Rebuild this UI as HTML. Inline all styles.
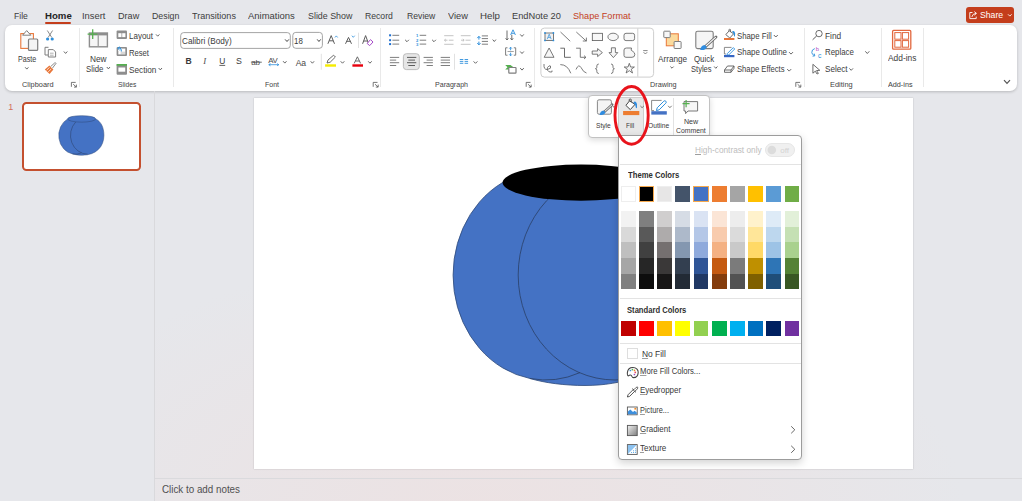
<!DOCTYPE html>
<html><head><meta charset="utf-8"><style>
*{margin:0;padding:0;box-sizing:border-box}
html,body{width:1022px;height:501px;overflow:hidden}
body{position:relative;font-family:"Liberation Sans", sans-serif;background:#E6E7EB}
.t{position:absolute;white-space:nowrap;line-height:1}
.a{position:absolute}
svg{position:absolute;overflow:visible}
.u{text-decoration:underline;text-underline-offset:0.5px;text-decoration-thickness:0.5px;text-decoration-color:rgba(60,60,60,0.5)}
</style></head>
<body>
<div class="a" style="left:0px;top:0px;width:1022px;height:501px;background:#E6E7EB"></div>
<div class="a" style="left:155px;top:91px;width:867px;height:410px;background:radial-gradient(ellipse 480px 260px at 330px 420px, rgba(236,226,227,1) 0%, rgba(236,226,227,0.6) 45%, rgba(230,231,235,0) 100%)"></div>
<div class="t" style="left:13.57px;top:11.39px;font-size:9.5px;color:#3D3D3D;font-weight:normal;transform:scaleX(0.9051);transform-origin:0 0;">File</div>
<div class="t" style="left:44.52px;top:11.39px;font-size:9.5px;color:#242424;font-weight:bold;transform:scaleX(1.0135);transform-origin:0 0;">Home</div>
<div class="a" style="left:45px;top:22px;width:26px;height:2px;background:#C43E1C;border-radius:1px"></div>
<div class="t" style="left:82.03px;top:11.39px;font-size:9.5px;color:#3D3D3D;font-weight:normal;transform:scaleX(0.9862);transform-origin:0 0;">Insert</div>
<div class="t" style="left:118.25px;top:11.39px;font-size:9.5px;color:#3D3D3D;font-weight:normal;transform:scaleX(0.9566);transform-origin:0 0;">Draw</div>
<div class="t" style="left:152.06px;top:11.39px;font-size:9.5px;color:#3D3D3D;font-weight:normal;transform:scaleX(0.9257);transform-origin:0 0;">Design</div>
<div class="t" style="left:192.25px;top:11.39px;font-size:9.5px;color:#3D3D3D;font-weight:normal;transform:scaleX(0.9522);transform-origin:0 0;">Transitions</div>
<div class="t" style="left:248.23px;top:11.39px;font-size:9.5px;color:#3D3D3D;font-weight:normal;transform:scaleX(0.9946);transform-origin:0 0;">Animations</div>
<div class="t" style="left:307.56px;top:11.39px;font-size:9.5px;color:#3D3D3D;font-weight:normal;transform:scaleX(0.9339);transform-origin:0 0;">Slide Show</div>
<div class="t" style="left:364.57px;top:11.39px;font-size:9.5px;color:#3D3D3D;font-weight:normal;transform:scaleX(0.9099);transform-origin:0 0;">Record</div>
<div class="t" style="left:406.57px;top:11.39px;font-size:9.5px;color:#3D3D3D;font-weight:normal;transform:scaleX(0.9104);transform-origin:0 0;">Review</div>
<div class="t" style="left:447.54px;top:11.39px;font-size:9.5px;color:#3D3D3D;font-weight:normal;transform:scaleX(0.9758);transform-origin:0 0;">View</div>
<div class="t" style="left:479.51px;top:11.39px;font-size:9.5px;color:#3D3D3D;font-weight:normal;transform:scaleX(1.0217);transform-origin:0 0;">Help</div>
<div class="t" style="left:511.54px;top:11.39px;font-size:9.5px;color:#3D3D3D;font-weight:normal;transform:scaleX(0.9749);transform-origin:0 0;">EndNote 20</div>
<div class="t" style="left:572.55px;top:11.39px;font-size:9.5px;color:#C43E1C;font-weight:normal;transform:scaleX(0.9569);transform-origin:0 0;">Shape Format</div>
<div class="a" style="left:966px;top:7px;width:48px;height:16px;background:#C43E1C;border-radius:3px"></div>
<div class="t" style="left:979.57px;top:10.19px;font-size:9.5px;color:#FFFFFF;font-weight:normal;transform:scaleX(0.9136);transform-origin:0 0;">Share</div>
<div class="a" style="left:5px;top:25px;width:1012px;height:66px;background:#FFFFFF;border-radius:7px;box-shadow:0 1px 3px rgba(0,0,0,0.20)"></div>
<svg width="1022" height="501" style="left:0px;top:0px" viewBox="0 0 1022 501"><rect x="180.7" y="32.6" width="109.6" height="15.8" rx="3" fill="#fff" stroke="#9A9A9A" stroke-width="0.9"/><rect x="292.8" y="32.4" width="29.6" height="15.9" rx="3" fill="#fff" stroke="#9A9A9A" stroke-width="0.9"/></svg>
<div class="a" style="left:79px;top:28px;width:1px;height:59px;background:#E9E9E9"></div>
<div class="a" style="left:172.7px;top:28px;width:1px;height:59px;background:#E9E9E9"></div>
<div class="a" style="left:380.4px;top:28px;width:1px;height:59px;background:#E9E9E9"></div>
<div class="a" style="left:534.2px;top:28px;width:1px;height:59px;background:#E9E9E9"></div>
<div class="a" style="left:803.7px;top:28px;width:1px;height:59px;background:#E9E9E9"></div>
<div class="a" style="left:880.5px;top:28px;width:1px;height:59px;background:#E9E9E9"></div>
<div class="a" style="left:922.6px;top:28px;width:1px;height:59px;background:#E9E9E9"></div>
<div class="t" style="left:22.13px;top:80.96px;font-size:7.2px;color:#424242;font-weight:normal;transform:scaleX(1.0251);transform-origin:0 0;">Clipboard</div>
<div class="t" style="left:117.66px;top:80.96px;font-size:7.2px;color:#424242;font-weight:normal;transform:scaleX(0.9333);transform-origin:0 0;">Slides</div>
<div class="t" style="left:265.35px;top:80.96px;font-size:7.2px;color:#424242;font-weight:normal;transform:scaleX(0.9729);transform-origin:0 0;">Font</div>
<div class="t" style="left:435.35px;top:80.96px;font-size:7.2px;color:#424242;font-weight:normal;transform:scaleX(0.9830);transform-origin:0 0;">Paragraph</div>
<div class="t" style="left:650.04px;top:80.96px;font-size:7.2px;color:#424242;font-weight:normal;transform:scaleX(1.0095);transform-origin:0 0;">Drawing</div>
<div class="t" style="left:830.23px;top:80.96px;font-size:7.2px;color:#424242;font-weight:normal;transform:scaleX(1.0299);transform-origin:0 0;">Editing</div>
<div class="t" style="left:888.44px;top:80.96px;font-size:7.2px;color:#424242;font-weight:normal;transform:scaleX(1.0061);transform-origin:0 0;">Add-ins</div>
<div class="t" style="left:17.94px;top:55.42px;font-size:8.7px;color:#3C3C3C;font-weight:normal;transform:scaleX(0.8197);transform-origin:0 0;">Paste</div>
<div class="t" style="left:90.28px;top:54.62px;font-size:8.7px;color:#3C3C3C;font-weight:normal;transform:scaleX(0.9564);transform-origin:0 0;">New</div>
<div class="t" style="left:86.11px;top:65.42px;font-size:8.7px;color:#3C3C3C;font-weight:normal;transform:scaleX(0.8939);transform-origin:0 0;">Slide</div>
<div class="t" style="left:129.40px;top:32.12px;font-size:8.7px;color:#3C3C3C;font-weight:normal;transform:scaleX(0.9198);transform-origin:0 0;">Layout</div>
<div class="t" style="left:129.42px;top:48.72px;font-size:8.7px;color:#3C3C3C;font-weight:normal;transform:scaleX(0.8794);transform-origin:0 0;">Reset</div>
<div class="t" style="left:129.39px;top:66.22px;font-size:8.7px;color:#3C3C3C;font-weight:normal;transform:scaleX(0.9461);transform-origin:0 0;">Section</div>
<div class="t" style="left:181.79px;top:37.22px;font-size:8.7px;color:#3C3C3C;font-weight:normal;transform:scaleX(0.9429);transform-origin:0 0;">Calibri (Body)</div>
<div class="t" style="left:294.10px;top:37.22px;font-size:8.7px;color:#3C3C3C;font-weight:normal;transform:scaleX(0.9089);transform-origin:0 0;">18</div>
<div class="t" style="left:658.09px;top:54.52px;font-size:8.7px;color:#3C3C3C;font-weight:normal;transform:scaleX(0.9417);transform-origin:0 0;">Arrange</div>
<div class="t" style="left:694.31px;top:54.52px;font-size:8.7px;color:#3C3C3C;font-weight:normal;transform:scaleX(0.9040);transform-origin:0 0;">Quick</div>
<div class="t" style="left:690.62px;top:65.02px;font-size:8.7px;color:#3C3C3C;font-weight:normal;transform:scaleX(0.8683);transform-origin:0 0;">Styles</div>
<div class="t" style="left:737.11px;top:31.92px;font-size:8.7px;color:#3C3C3C;font-weight:normal;transform:scaleX(0.8975);transform-origin:0 0;">Shape Fill</div>
<div class="t" style="left:737.11px;top:48.02px;font-size:8.7px;color:#3C3C3C;font-weight:normal;transform:scaleX(0.9079);transform-origin:0 0;">Shape Outline</div>
<div class="t" style="left:737.12px;top:65.02px;font-size:8.7px;color:#3C3C3C;font-weight:normal;transform:scaleX(0.8819);transform-origin:0 0;">Shape Effects</div>
<div class="t" style="left:824.88px;top:31.92px;font-size:8.7px;color:#3C3C3C;font-weight:normal;transform:scaleX(0.9603);transform-origin:0 0;">Find</div>
<div class="t" style="left:824.61px;top:48.02px;font-size:8.7px;color:#3C3C3C;font-weight:normal;transform:scaleX(0.9031);transform-origin:0 0;">Replace</div>
<div class="t" style="left:824.89px;top:65.22px;font-size:8.7px;color:#3C3C3C;font-weight:normal;transform:scaleX(0.9362);transform-origin:0 0;">Select</div>
<div class="t" style="left:887.58px;top:53.62px;font-size:8.7px;color:#3C3C3C;font-weight:normal;transform:scaleX(0.9651);transform-origin:0 0;">Add-ins</div>
<div class="a" style="left:154px;top:91px;width:1px;height:410px;background:#D9D9DC"></div>
<div class="t" style="left:8.35px;top:102.67px;font-size:9px;color:#D2705A;font-weight:normal;">1</div>
<div class="a" style="left:22px;top:101.8px;width:119px;height:69.2px;border:2.2px solid #C4502F;border-radius:4.5px;background:#fff"></div>
<div class="a" style="left:253.5px;top:97.8px;width:659.6px;height:371.3px;background:#FFFFFF;box-shadow:0 0 1.5px rgba(0,0,0,0.22)"></div>
<svg width="1022" height="501" style="left:0px;top:0px" viewBox="0 0 1022 501"><path d="M502.6,182.5 A93.5,105 0 0 0 530,378.5 C545,383 565,385.5 585,385.5 C662,385.5 705.5,338 705.5,275 C705.5,228 688,197 659.5,182.6 Z" fill="#4472C4"/><path d="M502.6,182.5 A93.5,105 0 0 0 530,378.5 C545,383 565,385.5 585,385.5 C662,385.5 705.5,338 705.5,275 C705.5,228 688,197 659.5,182.6" fill="none" stroke="#2F4A7A" stroke-width="0.8"/><ellipse cx="615" cy="275" rx="96.8" ry="105" fill="none" stroke="#2A3F66" stroke-width="0.8"/><path d="M 530,378.5 A93.5,105 0 0 0 580,372.6" fill="none" stroke="#2A3F66" stroke-width="0.8"/><ellipse cx="581" cy="182.6" rx="78.5" ry="18.1" fill="#000" stroke="none" stroke-width="0.8"/></svg>
<svg width="1022" height="501" style="left:0px;top:0px" viewBox="0 0 1022 501"><g transform="translate(23,103.6) scale(0.1788) translate(-253,-97)"><path d="M502.6,182.5 A93.5,105 0 0 0 530,378.5 C545,383 565,385.5 585,385.5 C662,385.5 705.5,338 705.5,275 C705.5,228 688,197 659.5,182.6 Z" fill="#4472C4"/><path d="M502.6,182.5 A93.5,105 0 0 0 530,378.5 C545,383 565,385.5 585,385.5 C662,385.5 705.5,338 705.5,275 C705.5,228 688,197 659.5,182.6" fill="none" stroke="#2F4A7A" stroke-width="2.9"/><path d="M548,199.6 A96.8,105 0 0 0 615,380" fill="none" stroke="#2A3F66" stroke-width="2.9"/><path d="M 530,378.5 A93.5,105 0 0 0 580,372.6" fill="none" stroke="#2A3F66" stroke-width="2.9"/><ellipse cx="581" cy="182.6" rx="78.5" ry="18.1" fill="#4472C4" stroke="#2F4A7A" stroke-width="2.9"/></g></svg>
<div class="a" style="left:155px;top:478px;width:867px;height:1px;background:#DADADD"></div>
<div class="t" style="left:162.31px;top:484.12px;font-size:10.6px;color:#505050;font-weight:normal;transform:scaleX(0.9259);transform-origin:0 0;">Click to add notes</div>
<div class="a" style="left:588px;top:95px;width:121.6px;height:43.3px;background:#fff;border:1px solid #C2C2C2;border-radius:4px;box-shadow:0 2px 6px rgba(0,0,0,0.15)"></div>
<div class="a" style="left:618.3px;top:97px;width:26px;height:38.5px;background:#E8E8E8;border:1px solid #CDCDCD;border-bottom:none;border-radius:3px 3px 0 0"></div>
<div class="a" style="left:673px;top:97.6px;width:1px;height:37.6px;background:#E2E2E2"></div>
<div class="t" style="left:596.07px;top:122.39px;font-size:7px;color:#3A3A3A;font-weight:normal;transform:scaleX(0.9420);transform-origin:0 0;">Style</div>
<div class="t" style="left:626.48px;top:122.39px;font-size:7px;color:#3A3A3A;font-weight:normal;transform:scaleX(0.9087);transform-origin:0 0;">Fill</div>
<div class="t" style="left:648.17px;top:122.39px;font-size:7px;color:#3A3A3A;font-weight:normal;transform:scaleX(0.9540);transform-origin:0 0;">Outline</div>
<div class="t" style="left:683.65px;top:118.39px;font-size:7px;color:#3A3A3A;font-weight:normal;transform:scaleX(1.0138);transform-origin:0 0;">New</div>
<div class="t" style="left:675.66px;top:127.39px;font-size:7px;color:#3A3A3A;font-weight:normal;transform:scaleX(0.9783);transform-origin:0 0;">Comment</div>
<div class="a" style="left:618px;top:135.3px;width:183.8px;height:325px;background:#fff;border:1px solid #9C9C9C;border-radius:0 4px 4px 4px;box-shadow:0 3px 9px rgba(0,0,0,0.18)"></div>
<div class="t" style="left:694.59px;top:145.92px;font-size:8.7px;color:#BDBDBD;font-weight:normal;transform:scaleX(0.9514);transform-origin:0 0;"><span class="u">H</span>igh-contrast only</div>
<div class="a" style="left:765.3px;top:143.3px;width:29.3px;height:13.3px;background:#F0F0F0;border:1px solid #E6E6E6;border-radius:7px"></div>
<svg width="1022" height="501" style="left:0px;top:0px" viewBox="0 0 1022 501"><circle cx="771.8" cy="150" r="4.3" fill="#DCDCDC"/></svg>
<div class="t" style="left:780.20px;top:146.53px;font-size:8px;color:#D3D3D3;font-weight:normal;">off</div>
<div class="a" style="left:619.5px;top:163.5px;width:181.5px;height:1px;background:#E3E3E3"></div>
<div class="t" style="left:627.62px;top:171.12px;font-size:8.7px;color:#2E2E2E;font-weight:bold;transform:scaleX(0.8849);transform-origin:0 0;">Theme Colors</div>
<div class="a" style="left:620.8px;top:186px;width:14.9px;height:15.5px;background:#FFFFFF;border:0.5px solid #EEEEEE;"></div>
<div class="a" style="left:638.5px;top:185.5px;width:15.9px;height:16.5px;background:#000000;border:1.2px solid #F5A94E"></div>
<div class="a" style="left:657.2px;top:186px;width:14.9px;height:15.5px;background:#E7E6E6;border:0.5px solid #EEEEEE;"></div>
<div class="a" style="left:675.4px;top:186px;width:14.9px;height:15.5px;background:#44546A;"></div>
<div class="a" style="left:693.1px;top:185.5px;width:15.9px;height:16.5px;background:#4472C4;border:1.2px solid #F5A94E"></div>
<div class="a" style="left:711.8px;top:186px;width:14.9px;height:15.5px;background:#ED7D31;"></div>
<div class="a" style="left:730.0px;top:186px;width:14.9px;height:15.5px;background:#A5A5A5;"></div>
<div class="a" style="left:748.2px;top:186px;width:14.9px;height:15.5px;background:#FFC000;"></div>
<div class="a" style="left:766.4px;top:186px;width:14.9px;height:15.5px;background:#5B9BD5;"></div>
<div class="a" style="left:784.6px;top:186px;width:14.9px;height:15.5px;background:#70AD47;"></div>
<div class="a" style="left:620.8px;top:211.0px;width:14.9px;height:15.74px;background:#F2F2F2"></div>
<div class="a" style="left:620.8px;top:226.64px;width:14.9px;height:15.74px;background:#D9D9D9"></div>
<div class="a" style="left:620.8px;top:242.28px;width:14.9px;height:15.74px;background:#BFBFBF"></div>
<div class="a" style="left:620.8px;top:257.92px;width:14.9px;height:15.74px;background:#A6A6A6"></div>
<div class="a" style="left:620.8px;top:273.56px;width:14.9px;height:15.74px;background:#808080"></div>
<div class="a" style="left:639.0px;top:211.0px;width:14.9px;height:15.74px;background:#7F7F7F"></div>
<div class="a" style="left:639.0px;top:226.64px;width:14.9px;height:15.74px;background:#595959"></div>
<div class="a" style="left:639.0px;top:242.28px;width:14.9px;height:15.74px;background:#404040"></div>
<div class="a" style="left:639.0px;top:257.92px;width:14.9px;height:15.74px;background:#262626"></div>
<div class="a" style="left:639.0px;top:273.56px;width:14.9px;height:15.74px;background:#0D0D0D"></div>
<div class="a" style="left:657.2px;top:211.0px;width:14.9px;height:15.74px;background:#D0CECE"></div>
<div class="a" style="left:657.2px;top:226.64px;width:14.9px;height:15.74px;background:#AEABAB"></div>
<div class="a" style="left:657.2px;top:242.28px;width:14.9px;height:15.74px;background:#757070"></div>
<div class="a" style="left:657.2px;top:257.92px;width:14.9px;height:15.74px;background:#3A3838"></div>
<div class="a" style="left:657.2px;top:273.56px;width:14.9px;height:15.74px;background:#171616"></div>
<div class="a" style="left:675.4px;top:211.0px;width:14.9px;height:15.74px;background:#D6DCE5"></div>
<div class="a" style="left:675.4px;top:226.64px;width:14.9px;height:15.74px;background:#ADB9CA"></div>
<div class="a" style="left:675.4px;top:242.28px;width:14.9px;height:15.74px;background:#8497B0"></div>
<div class="a" style="left:675.4px;top:257.92px;width:14.9px;height:15.74px;background:#333F50"></div>
<div class="a" style="left:675.4px;top:273.56px;width:14.9px;height:15.74px;background:#222A35"></div>
<div class="a" style="left:693.6px;top:211.0px;width:14.9px;height:15.74px;background:#DAE3F3"></div>
<div class="a" style="left:693.6px;top:226.64px;width:14.9px;height:15.74px;background:#B4C7E7"></div>
<div class="a" style="left:693.6px;top:242.28px;width:14.9px;height:15.74px;background:#8FAADC"></div>
<div class="a" style="left:693.6px;top:257.92px;width:14.9px;height:15.74px;background:#2F5597"></div>
<div class="a" style="left:693.6px;top:273.56px;width:14.9px;height:15.74px;background:#203864"></div>
<div class="a" style="left:711.8px;top:211.0px;width:14.9px;height:15.74px;background:#FBE5D6"></div>
<div class="a" style="left:711.8px;top:226.64px;width:14.9px;height:15.74px;background:#F8CBAD"></div>
<div class="a" style="left:711.8px;top:242.28px;width:14.9px;height:15.74px;background:#F4B183"></div>
<div class="a" style="left:711.8px;top:257.92px;width:14.9px;height:15.74px;background:#C55A11"></div>
<div class="a" style="left:711.8px;top:273.56px;width:14.9px;height:15.74px;background:#843C0C"></div>
<div class="a" style="left:730.0px;top:211.0px;width:14.9px;height:15.74px;background:#EDEDED"></div>
<div class="a" style="left:730.0px;top:226.64px;width:14.9px;height:15.74px;background:#DBDBDB"></div>
<div class="a" style="left:730.0px;top:242.28px;width:14.9px;height:15.74px;background:#C9C9C9"></div>
<div class="a" style="left:730.0px;top:257.92px;width:14.9px;height:15.74px;background:#7B7B7B"></div>
<div class="a" style="left:730.0px;top:273.56px;width:14.9px;height:15.74px;background:#525252"></div>
<div class="a" style="left:748.2px;top:211.0px;width:14.9px;height:15.74px;background:#FFF2CC"></div>
<div class="a" style="left:748.2px;top:226.64px;width:14.9px;height:15.74px;background:#FFE699"></div>
<div class="a" style="left:748.2px;top:242.28px;width:14.9px;height:15.74px;background:#FFD966"></div>
<div class="a" style="left:748.2px;top:257.92px;width:14.9px;height:15.74px;background:#BF9000"></div>
<div class="a" style="left:748.2px;top:273.56px;width:14.9px;height:15.74px;background:#7F6000"></div>
<div class="a" style="left:766.4px;top:211.0px;width:14.9px;height:15.74px;background:#DEEBF7"></div>
<div class="a" style="left:766.4px;top:226.64px;width:14.9px;height:15.74px;background:#BDD7EE"></div>
<div class="a" style="left:766.4px;top:242.28px;width:14.9px;height:15.74px;background:#9DC3E6"></div>
<div class="a" style="left:766.4px;top:257.92px;width:14.9px;height:15.74px;background:#2E75B6"></div>
<div class="a" style="left:766.4px;top:273.56px;width:14.9px;height:15.74px;background:#1F4E79"></div>
<div class="a" style="left:784.6px;top:211.0px;width:14.9px;height:15.74px;background:#E2F0D9"></div>
<div class="a" style="left:784.6px;top:226.64px;width:14.9px;height:15.74px;background:#C5E0B4"></div>
<div class="a" style="left:784.6px;top:242.28px;width:14.9px;height:15.74px;background:#A9D18E"></div>
<div class="a" style="left:784.6px;top:257.92px;width:14.9px;height:15.74px;background:#548235"></div>
<div class="a" style="left:784.6px;top:273.56px;width:14.9px;height:15.74px;background:#385723"></div>
<div class="a" style="left:619.5px;top:298px;width:181.5px;height:1px;background:#E3E3E3"></div>
<div class="t" style="left:627.32px;top:306.12px;font-size:8.7px;color:#2E2E2E;font-weight:bold;transform:scaleX(0.8782);transform-origin:0 0;">Standard Colors</div>
<div class="a" style="left:620.8px;top:321px;width:14.9px;height:15px;background:#C00000"></div>
<div class="a" style="left:639.0px;top:321px;width:14.9px;height:15px;background:#FF0000"></div>
<div class="a" style="left:657.2px;top:321px;width:14.9px;height:15px;background:#FFC000"></div>
<div class="a" style="left:675.4px;top:321px;width:14.9px;height:15px;background:#FFFF00"></div>
<div class="a" style="left:693.6px;top:321px;width:14.9px;height:15px;background:#92D050"></div>
<div class="a" style="left:711.8px;top:321px;width:14.9px;height:15px;background:#00B050"></div>
<div class="a" style="left:730.0px;top:321px;width:14.9px;height:15px;background:#00B0F0"></div>
<div class="a" style="left:748.2px;top:321px;width:14.9px;height:15px;background:#0070C0"></div>
<div class="a" style="left:766.4px;top:321px;width:14.9px;height:15px;background:#002060"></div>
<div class="a" style="left:784.6px;top:321px;width:14.9px;height:15px;background:#7030A0"></div>
<div class="a" style="left:619.5px;top:343.4px;width:181.5px;height:1px;background:#E3E3E3"></div>
<div class="a" style="left:627px;top:348px;width:10.6px;height:10.7px;border:1px solid #DEDEDE;background:#fff"></div>
<div class="t" style="left:641.58px;top:350.12px;font-size:8.7px;color:#383838;font-weight:normal;transform:scaleX(0.9682);transform-origin:0 0;"><span class="u">N</span>o Fill</div>
<div class="a" style="left:619.5px;top:363.2px;width:181.5px;height:1px;background:#E3E3E3"></div>
<div class="t" style="left:640.11px;top:367.12px;font-size:8.7px;color:#383838;font-weight:normal;transform:scaleX(0.8853);transform-origin:0 0;"><span class="u">M</span>ore Fill Colors...</div>
<div class="t" style="left:640.30px;top:386.12px;font-size:8.7px;color:#383838;font-weight:normal;transform:scaleX(0.9148);transform-origin:0 0;"><span class="u">E</span>yedropper</div>
<div class="t" style="left:640.33px;top:405.52px;font-size:8.7px;color:#383838;font-weight:normal;transform:scaleX(0.8436);transform-origin:0 0;"><span class="u">P</span>icture...</div>
<div class="t" style="left:640.30px;top:425.12px;font-size:8.7px;color:#383838;font-weight:normal;transform:scaleX(0.9115);transform-origin:0 0;"><span class="u">G</span>radient</div>
<div class="t" style="left:640.30px;top:444.12px;font-size:8.7px;color:#383838;font-weight:normal;transform:scaleX(0.9229);transform-origin:0 0;"><span class="u">T</span>exture</div>
<svg width="1022" height="501" style="left:0px;top:0px" viewBox="0 0 1022 501"><path d="M791.2,426.3 L794.8,429.8 L791.2,433.3 M791.2,445.8 L794.8,449.3 L791.2,452.8" fill="none" stroke="#555" stroke-width="0.9"/></svg>
<svg width="1022" height="501" style="left:0px;top:0px" viewBox="0 0 1022 501"><rect x="20.8" y="33.6" width="12.6" height="14.8" fill="#FAFAFA" stroke="#E8773A" stroke-width="1.1"/><path d="M22.6,35.2 L26.7,30.6 L30.8,35.2 Z" fill="#fff" stroke="#7E7E7E" stroke-width="1"/><rect x="28.5" y="39" width="9.2" height="11.4" rx="1" fill="#F4F4F4" stroke="#7E7E7E" stroke-width="1.2"/><path d="M25.2,67.3 L26.8,69.1 L28.4,67.3" fill="none" stroke="#555" stroke-width="0.9"/><path d="M47.3,30.5 L51.8,37.5 M52.6,30.5 L48.1,37.5" stroke="#7E7E7E" stroke-width="0.9" fill="none"/><circle cx="47.6" cy="39" r="1.6" fill="#2E8FDB"/><circle cx="52.2" cy="39" r="1.6" fill="#2E8FDB"/><path d="M48.5,47.3 L45,47.3 L45,55 L48,55" fill="none" stroke="#7E7E7E" stroke-width="1"/><path d="M48.3,49.6 L53.3,49.6 L55.6,52 L55.6,57 L48.3,57 Z" fill="#fff" stroke="#7E7E7E" stroke-width="1"/><path d="M50,53.2 H53.6 M50,55.2 H53.6" stroke="#7E7E7E" stroke-width="0.6"/><path d="M63.9,51.5 L65.6,53.4 L67.3,51.5" fill="none" stroke="#555" stroke-width="0.9"/><path d="M44.8,69.6 L49.4,65.6 L53.4,69.6 L49.6,74 Z" fill="#E8773A"/><path d="M46.6,70.2 L49.6,67.4 M48.2,71.8 L51.2,69" stroke="#fff" stroke-width="0.7"/><path d="M50.6,66.6 L54.6,63 Q55.8,62.4 56,63.4 L52.4,68.2" fill="#fff" stroke="#7E7E7E" stroke-width="0.9"/><rect x="89.4" y="33" width="18" height="13.8" fill="#F6F6F6" stroke="#8E8E8E" stroke-width="1.4"/><rect x="89.4" y="33" width="18" height="2.4" fill="#8E8E8E"/><path d="M98.2,35.3 V46" stroke="#8E8E8E" stroke-width="1.1"/><path d="M87.6,34.2 H97.4 M92.7,29.2 V39" stroke="#55B04F" stroke-width="1.3"/><path d="M106.8,67 L108.39999999999999,68.9 L110.0,67" fill="none" stroke="#555" stroke-width="0.9"/><rect x="116.6" y="30.4" width="10.4" height="8.6" rx="1" fill="#8E8E8E"/><rect x="118.3" y="33.2" width="3.2" height="3.9" fill="#fff"/><rect x="122.2" y="33.2" width="3.2" height="3.9" fill="#fff"/><path d="M156,34.4 L157.7,36.199999999999996 L159.4,34.4" fill="none" stroke="#555" stroke-width="0.9"/><rect x="116.6" y="47" width="10.4" height="9" rx="1" fill="#8E8E8E"/><rect x="118.3" y="48.6" width="7" height="5.8" fill="#fff"/><rect x="118.3" y="48.6" width="3.4" height="2.4" fill="#fff"/><path d="M118.2,48.4 Q121.2,46.6 121.4,51.6" fill="none" stroke="#2E8FDB" stroke-width="1.1"/><path d="M119.4,46.6 L117.6,48.4 L119.6,50" fill="none" stroke="#2E8FDB" stroke-width="0.9"/><rect x="120.6" y="51.6" width="4.7" height="2.8" fill="#8E8E8E" opacity="0.35"/><rect x="116.6" y="64" width="10.4" height="10.8" rx="1" fill="#8E8E8E"/><rect x="116.6" y="64" width="10.4" height="1.7" fill="#55B04F"/><rect x="118.4" y="67.5" width="6.8" height="4.2" fill="#fff"/><path d="M158.6,68 L160.29999999999998,69.9 L162.0,68" fill="none" stroke="#555" stroke-width="0.9"/><path d="M285.1,39.4 L287.0,41.5 L288.90000000000003,39.4" fill="none" stroke="#444" stroke-width="1"/><path d="M317.2,39.4 L318.95,41.5 L320.7,39.4" fill="none" stroke="#444" stroke-width="1"/><path d="M358.5,32.7 V48 M321.3,53.8 V69.7 M454.5,53.8 V69.7" stroke="#DEDEDE" stroke-width="0.9"/><path d="M327.9,43.8 L331.2,35.6 L334.5,43.8 M329.2,40.8 H333.2" fill="none" stroke="#5C5C5C" stroke-width="1"/><path d="M334.9,37.5 L336.3,35.9 L337.7,37.5" fill="none" stroke="#2E8FDB" stroke-width="0.8"/><path d="M345.5,43.8 L348.5,37.4 L351.5,43.8 M346.6,41.3 H350.4" fill="none" stroke="#5C5C5C" stroke-width="1"/><path d="M351.9,35.7 L353.3,37.3 L354.7,35.7" fill="none" stroke="#2E8FDB" stroke-width="0.8"/><path d="M362.6,43.8 L365.6,35.6 L368.6,43.8 M363.6,41 H367.6" fill="none" stroke="#5C5C5C" stroke-width="1"/><path d="M367.2,43.5 L370.5,39.6 L373,42 L369.7,45.6 Z" fill="#fff" stroke="#A64AC9" stroke-width="1"/><text x="185.6" y="64.3" font-family="Liberation Sans" font-weight="bold" font-size="8.6" fill="#3a3a3a">B</text><text x="203.2" y="64.3" font-family="Liberation Serif" font-style="italic" font-size="8.8" fill="#4a4a4a">I</text><text x="219.2" y="63.6" font-family="Liberation Sans" font-size="8.4" fill="#3a3a3a">U</text><path d="M219.4,65.4 H225.2" stroke="#3a3a3a" stroke-width="0.8"/><text x="236" y="64.3" font-family="Liberation Sans" font-size="8.8" fill="#3a3a3a">S</text><text x="251.2" y="64.9" font-family="Liberation Sans" font-size="8" fill="#4a4a4a" letter-spacing="-0.2">ab</text><path d="M250.9,62.2 H261.8" stroke="#4a4a4a" stroke-width="0.8"/><text x="268.2" y="63.2" font-family="Liberation Sans" font-size="7.8" fill="#4a4a4a" letter-spacing="-0.3">AV</text><path d="M268.8,64.7 H278.8 M270.5,63.6 L268.8,64.7 L270.5,65.8 M277.1,63.6 L278.8,64.7 L277.1,65.8" fill="none" stroke="#2E8FDB" stroke-width="0.8"/><path d="M283.1,61.2 L284.8,63.1 L286.5,61.2" fill="none" stroke="#555" stroke-width="0.9"/><text x="295.8" y="65.5" font-family="Liberation Sans" font-size="8.6" fill="#4a4a4a" letter-spacing="-0.3">Aa</text><path d="M310.7,61.3 L312.4,63.199999999999996 L314.09999999999997,61.3" fill="none" stroke="#555" stroke-width="0.9"/><path d="M327,63 L328,60 L333.6,55.2 L335.4,57 L330.2,62.2 Z" fill="#fff" stroke="#5C5C5C" stroke-width="0.9"/><rect x="325.1" y="64.3" width="10.9" height="2.4" fill="#F5EC00"/><path d="M340.7,61.3 L342.5,63.199999999999996 L344.3,61.3" fill="none" stroke="#555" stroke-width="0.9"/><path d="M354.2,63.4 L357.4,56.8 L360.6,63.4 M355.4,61 H359.4" fill="none" stroke="#5C5C5C" stroke-width="0.9"/><rect x="352.4" y="64.3" width="10.6" height="2.4" fill="#E8000E"/><path d="M368.2,61.3 L369.95,63.199999999999996 L371.7,61.3" fill="none" stroke="#555" stroke-width="0.9"/><rect x="389.1" y="34.3" width="2" height="2" fill="#1F6FD0"/><path d="M392.4,35.3 H399.2" stroke="#7E7E7E" stroke-width="1"/><rect x="389.1" y="39.2" width="2" height="2" fill="#1F6FD0"/><path d="M392.4,40.2 H399.2" stroke="#7E7E7E" stroke-width="1"/><rect x="389.1" y="43.1" width="2" height="2" fill="#1F6FD0"/><path d="M392.4,44.1 H399.2" stroke="#7E7E7E" stroke-width="1"/><path d="M405.1,39.8 L407.0,41.699999999999996 L408.90000000000003,39.8" fill="none" stroke="#555" stroke-width="0.9"/><path d="M419.7,35.3 H426.2" stroke="#7E7E7E" stroke-width="1"/><path d="M419.7,40.2 H426.2" stroke="#7E7E7E" stroke-width="1"/><path d="M419.7,44.1 H426.2" stroke="#7E7E7E" stroke-width="1"/><text x="416" y="37.1" font-family="Liberation Sans" font-weight="bold" font-size="4.2" fill="#2E8FDB">1</text><text x="416" y="41.9" font-family="Liberation Sans" font-weight="bold" font-size="4.2" fill="#2E8FDB">2</text><text x="416" y="45.9" font-family="Liberation Sans" font-weight="bold" font-size="4.2" fill="#2E8FDB">3</text><path d="M432.1,39.8 L434.0,41.699999999999996 L435.90000000000003,39.8" fill="none" stroke="#555" stroke-width="0.9"/><path d="M444.2,35.7 H453.5 M448.8,40.2 H453.5 M444.2,44.3 H453.5 M447.5,40.2 H444.6 M445.8,39 L444.4,40.2 L445.8,41.4" fill="none" stroke="#BDBDBD" stroke-width="0.9"/><path d="M460.8,35.7 H470.6 M465.5,40.2 H470.6 M460.8,44.3 H470.6 M461,40.2 H464 M462.8,39 L464.2,40.2 L462.8,41.4" fill="none" stroke="#BDBDBD" stroke-width="0.9"/><path d="M478.9,36.6 V39.6 M478.9,41.6 V44.6 M477.3,38.1 L478.9,36.3 L480.5,38.1 M477.3,43.1 L478.9,44.9 L480.5,43.1" fill="none" stroke="#2E8FDB" stroke-width="1"/><path d="M481.8,35.9 H488 M481.8,38.6 H488 M481.8,41.4 H488 M481.8,44.2 H488" stroke="#7E7E7E" stroke-width="1"/><path d="M492.7,39.6 L494.3,41.5 L495.9,39.6" fill="none" stroke="#555" stroke-width="0.9"/><path d="M389.9,57.4 H399.2 M389.9,60.1 H396.2 M389.9,62.7 H399.2 M389.9,65.5 H396.2" stroke="#7E7E7E" stroke-width="1"/><rect x="403.4" y="53.7" width="15.9" height="15.9" rx="3" fill="#E6E6E6" stroke="#B5B5B5" stroke-width="0.9"/><path d="M407,57.4 H416.3 M408.3,60.1 H415 M407,62.7 H416.3 M408.3,65.5 H415" stroke="#5C5C5C" stroke-width="1"/><path d="M423.6,57.4 H432.9 M426.6,60.1 H432.9 M423.6,62.7 H432.9 M426.6,65.5 H432.9" stroke="#7E7E7E" stroke-width="1"/><path d="M440.7,57.4 H450 M440.7,60.1 H450 M440.7,62.7 H450 M440.7,65.5 H450" stroke="#7E7E7E" stroke-width="1"/><path d="M459.8,59.5 H463.3 M464.6,59.5 H468.1 M459.8,61.4 H463.3 M464.6,61.4 H468.1 M459.8,63.3 H463.3 M464.6,63.3 H468.1" stroke="#2E8FDB" stroke-width="0.9"/><path d="M473.6,61.4 L475.5,63.3 L477.40000000000003,61.4" fill="none" stroke="#555" stroke-width="0.9"/><path d="M507,30.5 V39.8 M505.6,38.3 L507,40 L508.4,38.3 M511.8,34.8 V39.8 M510.4,38.3 L511.8,40 L513.2,38.3" fill="none" stroke="#5C5C5C" stroke-width="0.9"/><path d="M510.6,35 L513,29.8 L515.4,35 M511.5,33.3 H514.5" fill="none" stroke="#2E8FDB" stroke-width="0.9"/><path d="M520.2,34.4 L522.0,36.4 L523.8000000000001,34.4" fill="none" stroke="#555" stroke-width="0.9"/><path d="M507.5,47.8 H505.6 V55.2 H507.5 M513.8,47.8 H515.7 V55.2 H513.8" fill="none" stroke="#7E7E7E" stroke-width="1"/><path d="M507.5,51.5 H513.8" stroke="#7E7E7E" stroke-width="0.7"/><path d="M510.6,47.3 V50.3 M510.6,52.7 V55.7 M509.3,48.6 L510.6,47.2 L511.9,48.6 M509.3,54.4 L510.6,55.8 L511.9,54.4" fill="none" stroke="#2E8FDB" stroke-width="0.9"/><path d="M520.2,51.5 L522.0,53.5 L523.8000000000001,51.5" fill="none" stroke="#555" stroke-width="0.9"/><path d="M505.2,65 H510.5 L513.5,67.3 L510.5,69.6 H505.2 L507.5,67.3 Z" fill="#55B04F"/><rect x="508.8" y="67.5" width="7.2" height="5.7" rx="0.6" fill="#fff" stroke="#7E7E7E" stroke-width="1.2"/><path d="M520.2,68.1 L522.0,70.1 L523.8000000000001,68.1" fill="none" stroke="#555" stroke-width="0.9"/><path d="M71.4,86.8 V82.4 H75.7 M73.2,84.2 L76.2,87 M76.4,84.6 V87.1 H74.0" fill="none" stroke="#555" stroke-width="0.8"/><path d="M373.2,86.8 V82.4 H377.5 M375.0,84.2 L378.0,87 M378.2,84.6 V87.1 H375.8" fill="none" stroke="#555" stroke-width="0.8"/><path d="M526.2,86.8 V82.4 H530.5 M528.0,84.2 L531.0,87 M531.2,84.6 V87.1 H528.8000000000001" fill="none" stroke="#555" stroke-width="0.8"/><path d="M795.8,86.8 V82.4 H800.0999999999999 M797.5999999999999,84.2 L800.5999999999999,87 M800.8,84.6 V87.1 H798.4" fill="none" stroke="#555" stroke-width="0.8"/><rect x="540.9" y="28.1" width="112.7" height="49" rx="3.5" fill="#fff" stroke="#C8C8C8" stroke-width="0.9"/><path d="M637.8,28.5 V76.7" stroke="#C8C8C8" stroke-width="0.9"/><path d="M643.2,50.6 H647.6 M643.6,52.2 L645.4,54 L647.2,52.2" fill="none" stroke="#666" stroke-width="0.8"/><rect x="545" y="33" width="8.4" height="7.4" fill="#F0F0F0" stroke="#5A5A5A" stroke-width="0.8"/><circle cx="545" cy="33" r="0.9" fill="#2E8FDB"/><circle cx="553.4" cy="33" r="0.9" fill="#2E8FDB"/><circle cx="545" cy="40.4" r="0.9" fill="#2E8FDB"/><circle cx="553.4" cy="40.4" r="0.9" fill="#2E8FDB"/><path d="M547.2,39.2 L549.2,34.2 L551.2,39.2 M548,37.4 H550.4" fill="none" stroke="#2E8FDB" stroke-width="0.7"/><path d="M560.5,32 L570.2,41.2" stroke="#5A5A5A" stroke-width="0.8"/><path d="M576.3,32 L586.3,41.1 M582.8,41 H586.4 V37.6" fill="none" stroke="#5A5A5A" stroke-width="0.8"/><rect x="592.3" y="33.3" width="10.2" height="7.3" fill="#F7F7F7" stroke="#5A5A5A" stroke-width="0.8"/><ellipse cx="613.1" cy="36.9" rx="5.2" ry="3.7" fill="#F7F7F7" stroke="#5A5A5A" stroke-width="0.8"/><rect x="624" y="33.3" width="10.6" height="7.3" rx="2" fill="#F7F7F7" stroke="#5A5A5A" stroke-width="0.8"/><path d="M544.2,57.3 L549.1,48 L554,57.3 Z" fill="#F7F7F7" stroke="#5A5A5A" stroke-width="0.8"/><path d="M560.3,48.2 H564.5 V57.3 H570.8" fill="none" stroke="#5A5A5A" stroke-width="0.9"/><path d="M576.1,48.2 H580.3 V57.3 H585.8 M584,55.6 L585.9,57.3 L584,59" fill="none" stroke="#5A5A5A" stroke-width="0.8"/><path d="M592.2,51 H597.6 V48.6 L602.4,52.6 L597.6,56.6 V54.2 H592.2 Z" fill="#F7F7F7" stroke="#5A5A5A" stroke-width="0.8"/><path d="M611.4,47.8 H615.4 V52.6 H617.8 L613.4,57.6 L609,52.6 H611.4 Z" fill="#F7F7F7" stroke="#5A5A5A" stroke-width="0.8"/><path d="M624,50 Q624,48 626.5,48 H631.5 Q630,50.5 633,51.5 Q634.8,52.5 634.8,54.5 Q634.8,57.3 632,57.3 H626 Q624,57.3 624,55.5 Z" fill="#F7F7F7" stroke="#5A5A5A" stroke-width="0.8"/><path d="M544,64 Q543.5,70 547.5,69.5 Q552,68.5 550.5,66 Q549,65 547.5,67.5 Q546.5,71 550,72 Q553,72.5 552,70.5" fill="none" stroke="#5A5A5A" stroke-width="0.8"/><path d="M560.3,64.6 Q567.5,64.5 570.8,73.3" fill="none" stroke="#5A5A5A" stroke-width="0.8"/><path d="M576,69.5 Q578.5,63.5 581,67.5 Q583.5,72.5 586.5,73" fill="none" stroke="#5A5A5A" stroke-width="0.8"/><path d="M598.8,64 Q596.8,64 596.8,66 V67.5 Q596.8,68.5 595.4,68.7 Q596.8,69 596.8,70 V71.5 Q596.8,73.5 598.8,73.5" fill="none" stroke="#5A5A5A" stroke-width="0.8"/><path d="M611,64 Q613,64 613,66 V67.5 Q613,68.5 614.4,68.7 Q613,69 613,70 V71.5 Q613,73.5 611,73.5" fill="none" stroke="#5A5A5A" stroke-width="0.8"/><path d="M629.3,63.3 L630.6,67 L634.4,67 L631.3,69.2 L632.5,73 L629.3,70.7 L626.1,73 L627.3,69.2 L624.2,67 L628,67 Z" fill="#F7F7F7" stroke="#5A5A5A" stroke-width="0.8"/><rect x="666.3" y="33.8" width="12" height="12" fill="#FBDA9D" stroke="#E8773A" stroke-width="1"/><rect x="663.8" y="31.2" width="6.4" height="6.4" rx="0.6" fill="#F7F7F7" stroke="#7E7E7E" stroke-width="1"/><rect x="674.1" y="41.5" width="7" height="7" rx="0.6" fill="#F7F7F7" stroke="#7E7E7E" stroke-width="1"/><path d="M670.4,66.6 L672.0,68.19999999999999 L673.6,66.6" fill="none" stroke="#555" stroke-width="0.9"/><rect x="695.8" y="31.2" width="17.4" height="17.4" rx="1.8" fill="#F5F5F5" stroke="#7E7E7E" stroke-width="1.1"/><path d="M716,37 L705.6,46.4" stroke="#6E6E6E" stroke-width="2.8" stroke-linecap="round"/><path d="M715.8,37.2 L705.8,46.2" stroke="#fff" stroke-width="1.1"/><path d="M700.2,50 Q700.8,45.4 704.6,45 L706.8,47 Q705.8,50.6 700.2,50 Z" fill="#2F8CE0"/><path d="M714.2,66.5 L715.8000000000001,68.3 L717.4000000000001,66.5" fill="none" stroke="#555" stroke-width="0.9"/><path d="M725.8,34.6 L729.2,30.8 L733.6,33.8 L729.8,38 Z" fill="#fff" stroke="#5C5C5C" stroke-width="0.9" stroke-linejoin="round"/><path d="M728.9,31 V29.6 Q729.7,29 730.5,29.6 V32" fill="none" stroke="#5C5C5C" stroke-width="0.8"/><path d="M732,31.6 Q733.2,30.4 734.4,31.4 Q735.6,32.8 735,36 Q734.6,37 734,36 Q733.8,33.4 732,31.6 Z" fill="#2E8FDB"/><rect x="724" y="38" width="10.4" height="2" fill="#E8773A"/><path d="M773.8,35 L775.8,37 L777.8,35" fill="none" stroke="#555" stroke-width="0.9"/><path d="M731.5,47.4 H724.4 V54 H726" fill="none" stroke="#7E7E7E" stroke-width="0.9"/><path d="M727.3,53.6 L733.3,47.6 L734.7,49 L728.7,55 L727,55.3 Z" fill="#fff" stroke="#2E8FDB" stroke-width="0.9"/><rect x="724" y="55" width="10.4" height="2.2" fill="#3566C4"/><path d="M789,52.1 L791.0,54.1 L793,52.1" fill="none" stroke="#555" stroke-width="0.9"/><path d="M724.5,70 L727.5,66 H734 L731,70 Z M724.5,70 V72.3 H731 L734,68.3 V66 M731,70 V72.3" fill="#fff" stroke="#5C5C5C" stroke-width="0.9"/><path d="M787.2,69.1 L789.2,71.1 L791.2,69.1" fill="none" stroke="#555" stroke-width="0.9"/><circle cx="819" cy="33.6" r="3.2" fill="none" stroke="#5C5C5C" stroke-width="0.9"/><path d="M816.7,35.9 L812.6,39.8" stroke="#5C5C5C" stroke-width="1"/><path d="M814.8,48.6 Q811.6,49.4 811.8,52.6 Q812,54.6 814.4,55.6" fill="none" stroke="#2E8FDB" stroke-width="0.9"/><path d="M812.6,56.2 L814.8,55.8 L814.2,53.6" fill="none" stroke="#2E8FDB" stroke-width="0.9"/><text x="815.8" y="51.4" font-family="Liberation Sans" font-size="5.8" fill="#B146C2">b</text><text x="817.9" y="57.8" font-family="Liberation Sans" font-size="6.8" fill="#2E8FDB">c</text><path d="M865.3,51.3 L867.3,53.5 L869.3,51.3" fill="none" stroke="#555" stroke-width="0.9"/><path d="M812.9,64.3 L819.8,70.3 L816.5,70.6 L818.4,73.4 L817,74 L815.3,71.2 L812.9,73.2 Z" fill="#fff" stroke="#5C5C5C" stroke-width="0.9"/><path d="M849.4,68.4 L851.1999999999999,70.30000000000001 L853.0,68.4" fill="none" stroke="#555" stroke-width="0.9"/><rect x="892.6" y="30.4" width="18.2" height="18.8" rx="1" fill="#fff" stroke="#E2683F" stroke-width="1.3"/><rect x="894.8" y="32.6" width="6.2" height="6.6" fill="none" stroke="#E2683F" stroke-width="1"/><rect x="902.4" y="32.6" width="6.2" height="6.6" fill="none" stroke="#E2683F" stroke-width="1"/><rect x="894.8" y="40.6" width="6.2" height="6.6" fill="none" stroke="#E2683F" stroke-width="1"/><rect x="902.4" y="40.6" width="6.2" height="6.6" fill="none" stroke="#E2683F" stroke-width="1"/><path d="M1004,80.2 L1007,83.4 L1010,80.2" fill="none" stroke="#555" stroke-width="1.2"/><path d="M972.5,12.5 H969.8 V18.6 H976.2 V16.6" fill="none" stroke="#fff" stroke-width="0.9"/><path d="M971.8,17 Q972.5,13.6 976,13.4 M974.3,11.6 L976.5,13.4 L974.3,15.2" fill="none" stroke="#fff" stroke-width="0.9"/><path d="M1008,14.3 L1009.8,16.1 L1011.6,14.3" fill="none" stroke="#fff" stroke-width="0.9"/></svg>
<svg width="1022" height="501" style="left:0px;top:0px" viewBox="0 0 1022 501"><rect x="597.4" y="99.8" width="14" height="14.4" rx="1.6" fill="#F4F4F4" stroke="#7A7A7A" stroke-width="0.9"/><path d="M612.2,104.6 L604.6,111.6" stroke="#6E6E6E" stroke-width="2.6" stroke-linecap="round"/><path d="M612,104.8 L604.8,111.4" stroke="#fff" stroke-width="1"/><path d="M599.6,115 Q600.2,111 603.6,110.6 L605.4,112.3 Q604.6,115.6 599.6,115 Z" fill="#2F8CE0"/><path d="M625.9,105.4 L629.6,100.8 L635,104.4 L630.3,109.6 Z" fill="#fff" stroke="#3E3E3E" stroke-width="0.95" stroke-linejoin="round"/><path d="M629.2,101.2 V99.4 Q630.2,98.6 631.2,99.4 V102.2" fill="none" stroke="#3E3E3E" stroke-width="0.85"/><path d="M633.4,102.4 Q634.6,100.9 636,102 Q637.6,103.6 637,107.4 Q636.6,108.8 635.8,107.6 Q635.6,104.4 633.4,102.4 Z" fill="#2F8CE0"/><path d="M612.7,105.9 L614.0,107.4 L615.3000000000001,105.9" fill="none" stroke="#555" stroke-width="0.8"/><rect x="623.1" y="111" width="16.2" height="4.1" fill="#ED7D31"/><path d="M640.4,106 L642.1,107.7 L643.8,106" fill="none" stroke="#555" stroke-width="0.8"/><path d="M661.6,100.4 H651.6 V110.6 H654" fill="none" stroke="#7A7A7A" stroke-width="0.9"/><path d="M656.4,110.6 L657.2,107.8 L663.8,101.2 Q664.8,100.2 665.8,101.2 Q666.8,102.2 665.8,103.2 L659.2,109.8 Z" fill="#fff" stroke="#2E8FDB" stroke-width="1" stroke-linejoin="round"/><rect x="651.3" y="111.2" width="15.5" height="3.4" fill="#4472C4"/><path d="M668.1,105.8 L669.9,107.7 L671.7,105.8" fill="none" stroke="#555" stroke-width="0.8"/><path d="M684,101.6 H697.6 V111 H688 L685.6,113.6 V111 H684 Z" fill="#F7F7F7" stroke="#6A6A6A" stroke-width="0.9"/><path d="M682.5,103.6 H689.6 M686.1,100 V107.2" stroke="#55B04F" stroke-width="1.2"/></svg>
<svg width="1022" height="501" style="left:0px;top:0px" viewBox="0 0 1022 501"><path d="M632.8,367.4 C636.6,367.4 638.4,370 638.2,372.6 C638,375.8 636.8,377.6 633.4,377.6 C631.4,377.6 632.4,375.2 630.4,375 C628.6,374.8 628.8,376.6 627.8,375.6 C627.2,374.8 627.2,373.6 627.4,372.4 C627.8,369.4 630,367.4 632.8,367.4 Z" fill="#fff" stroke="#404040" stroke-width="1.05"/><circle cx="630.4" cy="370.5" r="0.85" fill="#3B8EDC"/><circle cx="632.4" cy="369.6" r="0.85" fill="#50B050"/><circle cx="634.5" cy="370.4" r="0.85" fill="#F08A24"/><circle cx="635.3" cy="372.4" r="0.85" fill="#E8485E"/><circle cx="634.4" cy="374.5" r="0.85" fill="#9B4FC9"/><path d="M627.4,397 L628,394.8 L633.2,389.6 L634.8,391.2 L629.6,396.4 Z" fill="#fff" stroke="#3A3A3A" stroke-width="0.85" stroke-linejoin="round"/><path d="M632.2,388.6 L636,392.4" stroke="#3A3A3A" stroke-width="0.9"/><path d="M634,389.6 L636.2,387.4 Q637.4,386.6 637.8,387.4 Q638,388.2 637,389.2 L634.8,391.4" fill="#fff" stroke="#3A3A3A" stroke-width="0.85"/><rect x="627.4" y="407" width="9.8" height="7.8" fill="#fff" stroke="#5A5A5A" stroke-width="0.9"/><path d="M627.9,414.3 V411.5 L630.3,409.6 L633,412 L634.6,410.8 L636.8,412.5 V414.3 Z" fill="#3D8FDD"/><rect x="634.4" y="408" width="1.8" height="1.6" fill="#F08A24"/><defs><linearGradient id="gg" x1="0" y1="0" x2="1" y2="1"><stop offset="0" stop-color="#F2F2F2"/><stop offset="1" stop-color="#7E7E7E"/></linearGradient></defs><rect x="627.4" y="425.4" width="9.8" height="10.2" fill="url(#gg)" stroke="#555" stroke-width="0.9"/><rect x="627.4" y="444.6" width="9.8" height="9.8" fill="#fff" stroke="#555" stroke-width="0.9"/><path d="M627.9,453.9 V445.1 H636.7 Z" fill="#8EC3F0"/><circle cx="635.6" cy="448.8" r="0.5" fill="#2E8FDB"/><circle cx="633.6" cy="450.8" r="0.5" fill="#2E8FDB"/><circle cx="635.6" cy="450.8" r="0.5" fill="#2E8FDB"/><circle cx="631.6" cy="452.6" r="0.5" fill="#2E8FDB"/><circle cx="633.6" cy="452.6" r="0.5" fill="#2E8FDB"/><circle cx="635.6" cy="452.6" r="0.5" fill="#2E8FDB"/></svg>
<svg width="1022" height="501" style="left:0px;top:0px" viewBox="0 0 1022 501"><ellipse cx="631.6" cy="115.35" rx="16.6" ry="28.85" fill="none" stroke="#E8131B" stroke-width="2.9"/></svg>
</body></html>
